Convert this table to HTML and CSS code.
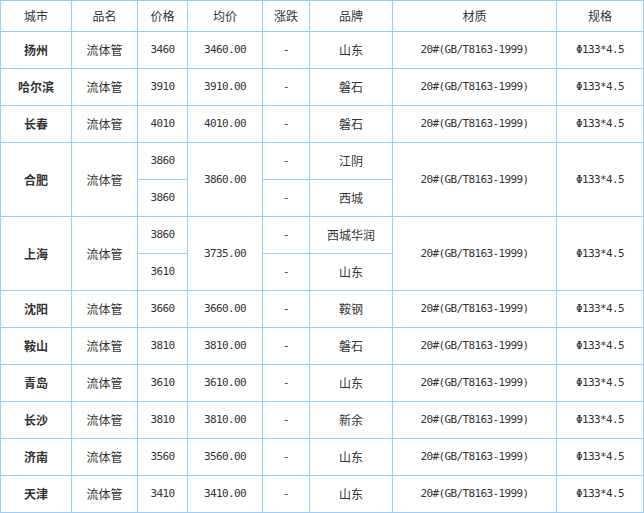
FILE: index.html
```
<!DOCTYPE html>
<html lang="zh">
<head>
<meta charset="utf-8">
<title>流体管价格</title>
<link rel="stylesheet" href="styles.css">
</head>
<body>
<table class="price">
<colgroup>
<col class="c1"><col class="c2"><col class="c3"><col class="c4"><col class="c5"><col class="c6"><col class="c7"><col class="c8">
</colgroup>
<thead>
<tr class="head"><th>城市</th><th>品名</th><th>价格</th><th>均价</th><th>涨跌</th><th>品牌</th><th>材质</th><th>规格</th></tr>
</thead>
<tbody>
<tr><td class="city">扬州</td><td>流体管</td><td class="num">3460</td><td class="num">3460.00</td><td class="num">-</td><td>山东</td><td class="num">20#(GB/T8163-1999)</td><td class="num">Φ133*4.5</td></tr>
<tr><td class="city">哈尔滨</td><td>流体管</td><td class="num">3910</td><td class="num">3910.00</td><td class="num">-</td><td>磐石</td><td class="num">20#(GB/T8163-1999)</td><td class="num">Φ133*4.5</td></tr>
<tr><td class="city">长春</td><td>流体管</td><td class="num">4010</td><td class="num">4010.00</td><td class="num">-</td><td>磐石</td><td class="num">20#(GB/T8163-1999)</td><td class="num">Φ133*4.5</td></tr>
<tr><td class="city" rowspan="2">合肥</td><td rowspan="2">流体管</td><td class="num">3860</td><td class="num" rowspan="2">3860.00</td><td class="num">-</td><td>江阴</td><td class="num" rowspan="2">20#(GB/T8163-1999)</td><td class="num" rowspan="2">Φ133*4.5</td></tr>
<tr><td class="num">3860</td><td class="num">-</td><td>西城</td></tr>
<tr><td class="city" rowspan="2">上海</td><td rowspan="2">流体管</td><td class="num">3860</td><td class="num" rowspan="2">3735.00</td><td class="num">-</td><td>西城华润</td><td class="num" rowspan="2">20#(GB/T8163-1999)</td><td class="num" rowspan="2">Φ133*4.5</td></tr>
<tr><td class="num">3610</td><td class="num">-</td><td>山东</td></tr>
<tr><td class="city">沈阳</td><td>流体管</td><td class="num">3660</td><td class="num">3660.00</td><td class="num">-</td><td>鞍钢</td><td class="num">20#(GB/T8163-1999)</td><td class="num">Φ133*4.5</td></tr>
<tr><td class="city">鞍山</td><td>流体管</td><td class="num">3810</td><td class="num">3810.00</td><td class="num">-</td><td>磐石</td><td class="num">20#(GB/T8163-1999)</td><td class="num">Φ133*4.5</td></tr>
<tr><td class="city">青岛</td><td>流体管</td><td class="num">3610</td><td class="num">3610.00</td><td class="num">-</td><td>山东</td><td class="num">20#(GB/T8163-1999)</td><td class="num">Φ133*4.5</td></tr>
<tr><td class="city">长沙</td><td>流体管</td><td class="num">3810</td><td class="num">3810.00</td><td class="num">-</td><td>新余</td><td class="num">20#(GB/T8163-1999)</td><td class="num">Φ133*4.5</td></tr>
<tr><td class="city">济南</td><td>流体管</td><td class="num">3560</td><td class="num">3560.00</td><td class="num">-</td><td>山东</td><td class="num">20#(GB/T8163-1999)</td><td class="num">Φ133*4.5</td></tr>
<tr><td class="city">天津</td><td>流体管</td><td class="num">3410</td><td class="num">3410.00</td><td class="num">-</td><td>山东</td><td class="num">20#(GB/T8163-1999)</td><td class="num">Φ133*4.5</td></tr>
</tbody>
</table>
</body>
</html>
```
FILE: styles.css
```
html, body {
  margin: 0;
  padding: 0;
  background: #fff;
}
.price {
  border-collapse: collapse;
  table-layout: fixed;
  width: 643px;
  font-family: "Noto Sans CJK SC", "Liberation Sans", sans-serif;
  font-size: 12px;
  color: #333;
}
.c1 { width: 71px; }
.c2 { width: 66px; }
.c3 { width: 50px; }
.c4 { width: 75px; }
.c5 { width: 47px; }
.c6 { width: 83px; }
.c7 { width: 164px; }
.c8 { width: 87px; }
.price th,
.price td {
  border: 1px solid #99ccff;
  padding: 0;
  text-align: center;
  vertical-align: middle;
  font-weight: normal;
  line-height: 14px;
  white-space: nowrap;
}
.price tr { height: 37px; }
.price tr.head { height: 31px; }
.price td.city { font-weight: bold; }
.price td.num {
  font-family: "DejaVu Sans Mono", "Liberation Mono", monospace;
  font-size: 11px;
  letter-spacing: -0.62px;
}
```
